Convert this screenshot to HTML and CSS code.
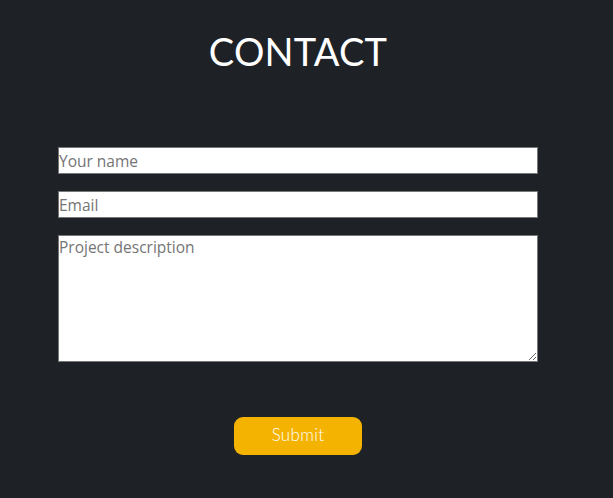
FILE: index.html
```html
<!DOCTYPE html>
<html>
<head>
<meta charset="utf-8">
<link rel="stylesheet" href="styles.css">
</head>
<body>
<section class="contact">
  <h1 class="title">CONTACT</h1>
  <form class="form">
    <input class="field" type="text" placeholder="Your name">
    <input class="field" type="email" placeholder="Email">
    <textarea class="field area" placeholder="Project description"></textarea>
    <div class="actions">
      <button class="submit" type="button">Submit</button>
    </div>
  </form>
</section>
</body>
</html>
```
FILE: styles.css
```css
html, body {
  margin: 0;
  padding: 0;
  background: #1e2226;
}
.contact {
  width: 580px;
  margin-left: 8px;
  padding-top: 27px;
}
.title {
  margin: 0;
  text-align: center;
  color: #ffffff;
  font-family: "Lato", sans-serif;
  font-weight: 400;
  font-size: 38px;
  line-height: 48px;
  letter-spacing: 0.2px;
}
.form {
  margin: 72px 50px 0;
  display: flex;
  flex-direction: column;
  gap: 17px;
}
.field {
  display: block;
  box-sizing: border-box;
  width: 480px;
  height: 27px;
  margin: 0;
  padding: 0;
  border: 1px solid #767676;
  background: #ffffff;
  font-family: "Open Sans", sans-serif;
  font-size: 15.5px;
  color: #333;
  outline: none;
}
.field::placeholder {
  color: #757575;
}
.area {
  height: 127px;
  resize: vertical;
  line-height: 22px;
}
.actions {
  display: flex;
  justify-content: center;
  margin-top: 38px;
}
.submit {
  width: 128px;
  height: 38px;
  padding: 0 0 3px;
  border: none;
  border-radius: 9px;
  background: #f5b301;
  color: #ffffff;
  font-family: "Lato", sans-serif;
  font-weight: 300;
  font-size: 17px;
  letter-spacing: 0.3px;
  cursor: pointer;
}
```
